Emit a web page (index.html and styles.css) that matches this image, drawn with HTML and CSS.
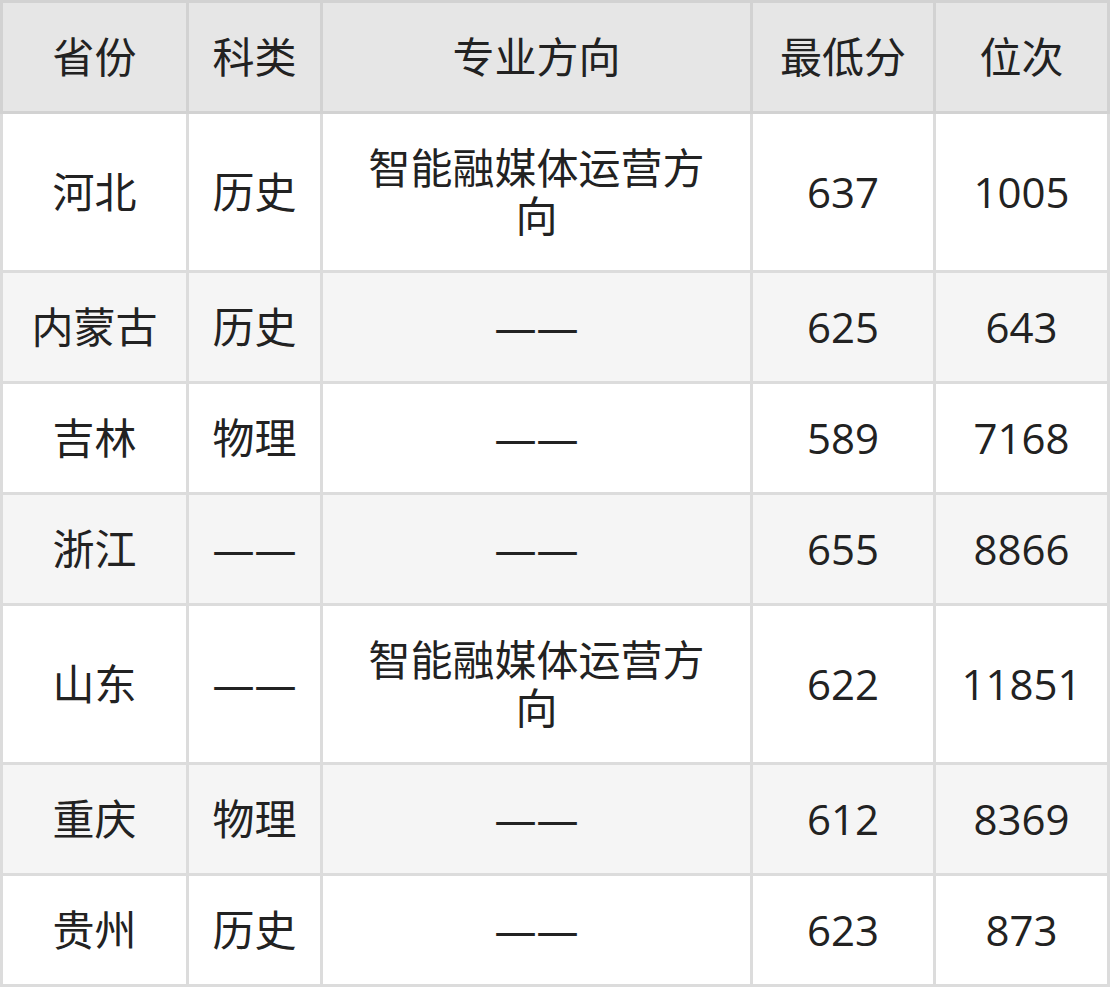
FILE: index.html
```html
<!DOCTYPE html>
<html lang="zh-CN">
<head>
<meta charset="utf-8">
<title>录取分数</title>
<link rel="stylesheet" href="styles.css">
</head>
<body>
<table class="score-table">
  <colgroup>
    <col class="c1"><col class="c2"><col class="c3"><col class="c4"><col class="c5">
  </colgroup>
  <thead>
    <tr><th>省份</th><th>科类</th><th>专业方向</th><th>最低分</th><th>位次</th></tr>
  </thead>
  <tbody>
    <tr><td>河北</td><td>历史</td><td>智能融媒体运营方向</td><td>637</td><td>1005</td></tr>
    <tr><td>内蒙古</td><td>历史</td><td>——</td><td>625</td><td>643</td></tr>
    <tr><td>吉林</td><td>物理</td><td>——</td><td>589</td><td>7168</td></tr>
    <tr><td>浙江</td><td>——</td><td>——</td><td>655</td><td>8866</td></tr>
    <tr><td>山东</td><td>——</td><td>智能融媒体运营方向</td><td>622</td><td>11851</td></tr>
    <tr><td>重庆</td><td>物理</td><td>——</td><td>612</td><td>8369</td></tr>
    <tr><td>贵州</td><td>历史</td><td>——</td><td>623</td><td>873</td></tr>
  </tbody>
</table>
</body>
</html>
```

FILE: styles.css
```css
html, body {
  margin: 0;
  padding: 0;
  background: #ffffff;
}

.score-table {
  width: 1110px;
  table-layout: fixed;
  border-collapse: collapse;
  font-family: "Open Sans", "Noto Sans CJK SC", sans-serif;
  font-size: 42px;
  line-height: 48px;
  color: #222222;
}

.c1 { width: 186px; }
.c2 { width: 134px; }
.c3 { width: 430px; }
.c4 { width: 183px; }
.c5 { width: 174px; }

.score-table th,
.score-table td {
  border: 3px solid #dcdcdc;
  padding: 30px 28px;
  text-align: center;
  vertical-align: middle;
  font-weight: normal;
}

.score-table th {
  background: #e6e6e6;
  border-color: #d2d2d2;
}

.score-table tbody tr:nth-child(even) td {
  background: #f5f5f5;
}

.score-table td:first-child,
.score-table th:first-child {
  padding-left: 0;
  padding-right: 0;
}

.score-table td:nth-child(2),
.score-table th:nth-child(2) {
  padding-left: 0;
  padding-right: 0;
}

.score-table td:nth-child(4),
.score-table td:nth-child(5),
.score-table th:nth-child(4),
.score-table th:nth-child(5) {
  padding-left: 0;
  padding-right: 0;
}
```
